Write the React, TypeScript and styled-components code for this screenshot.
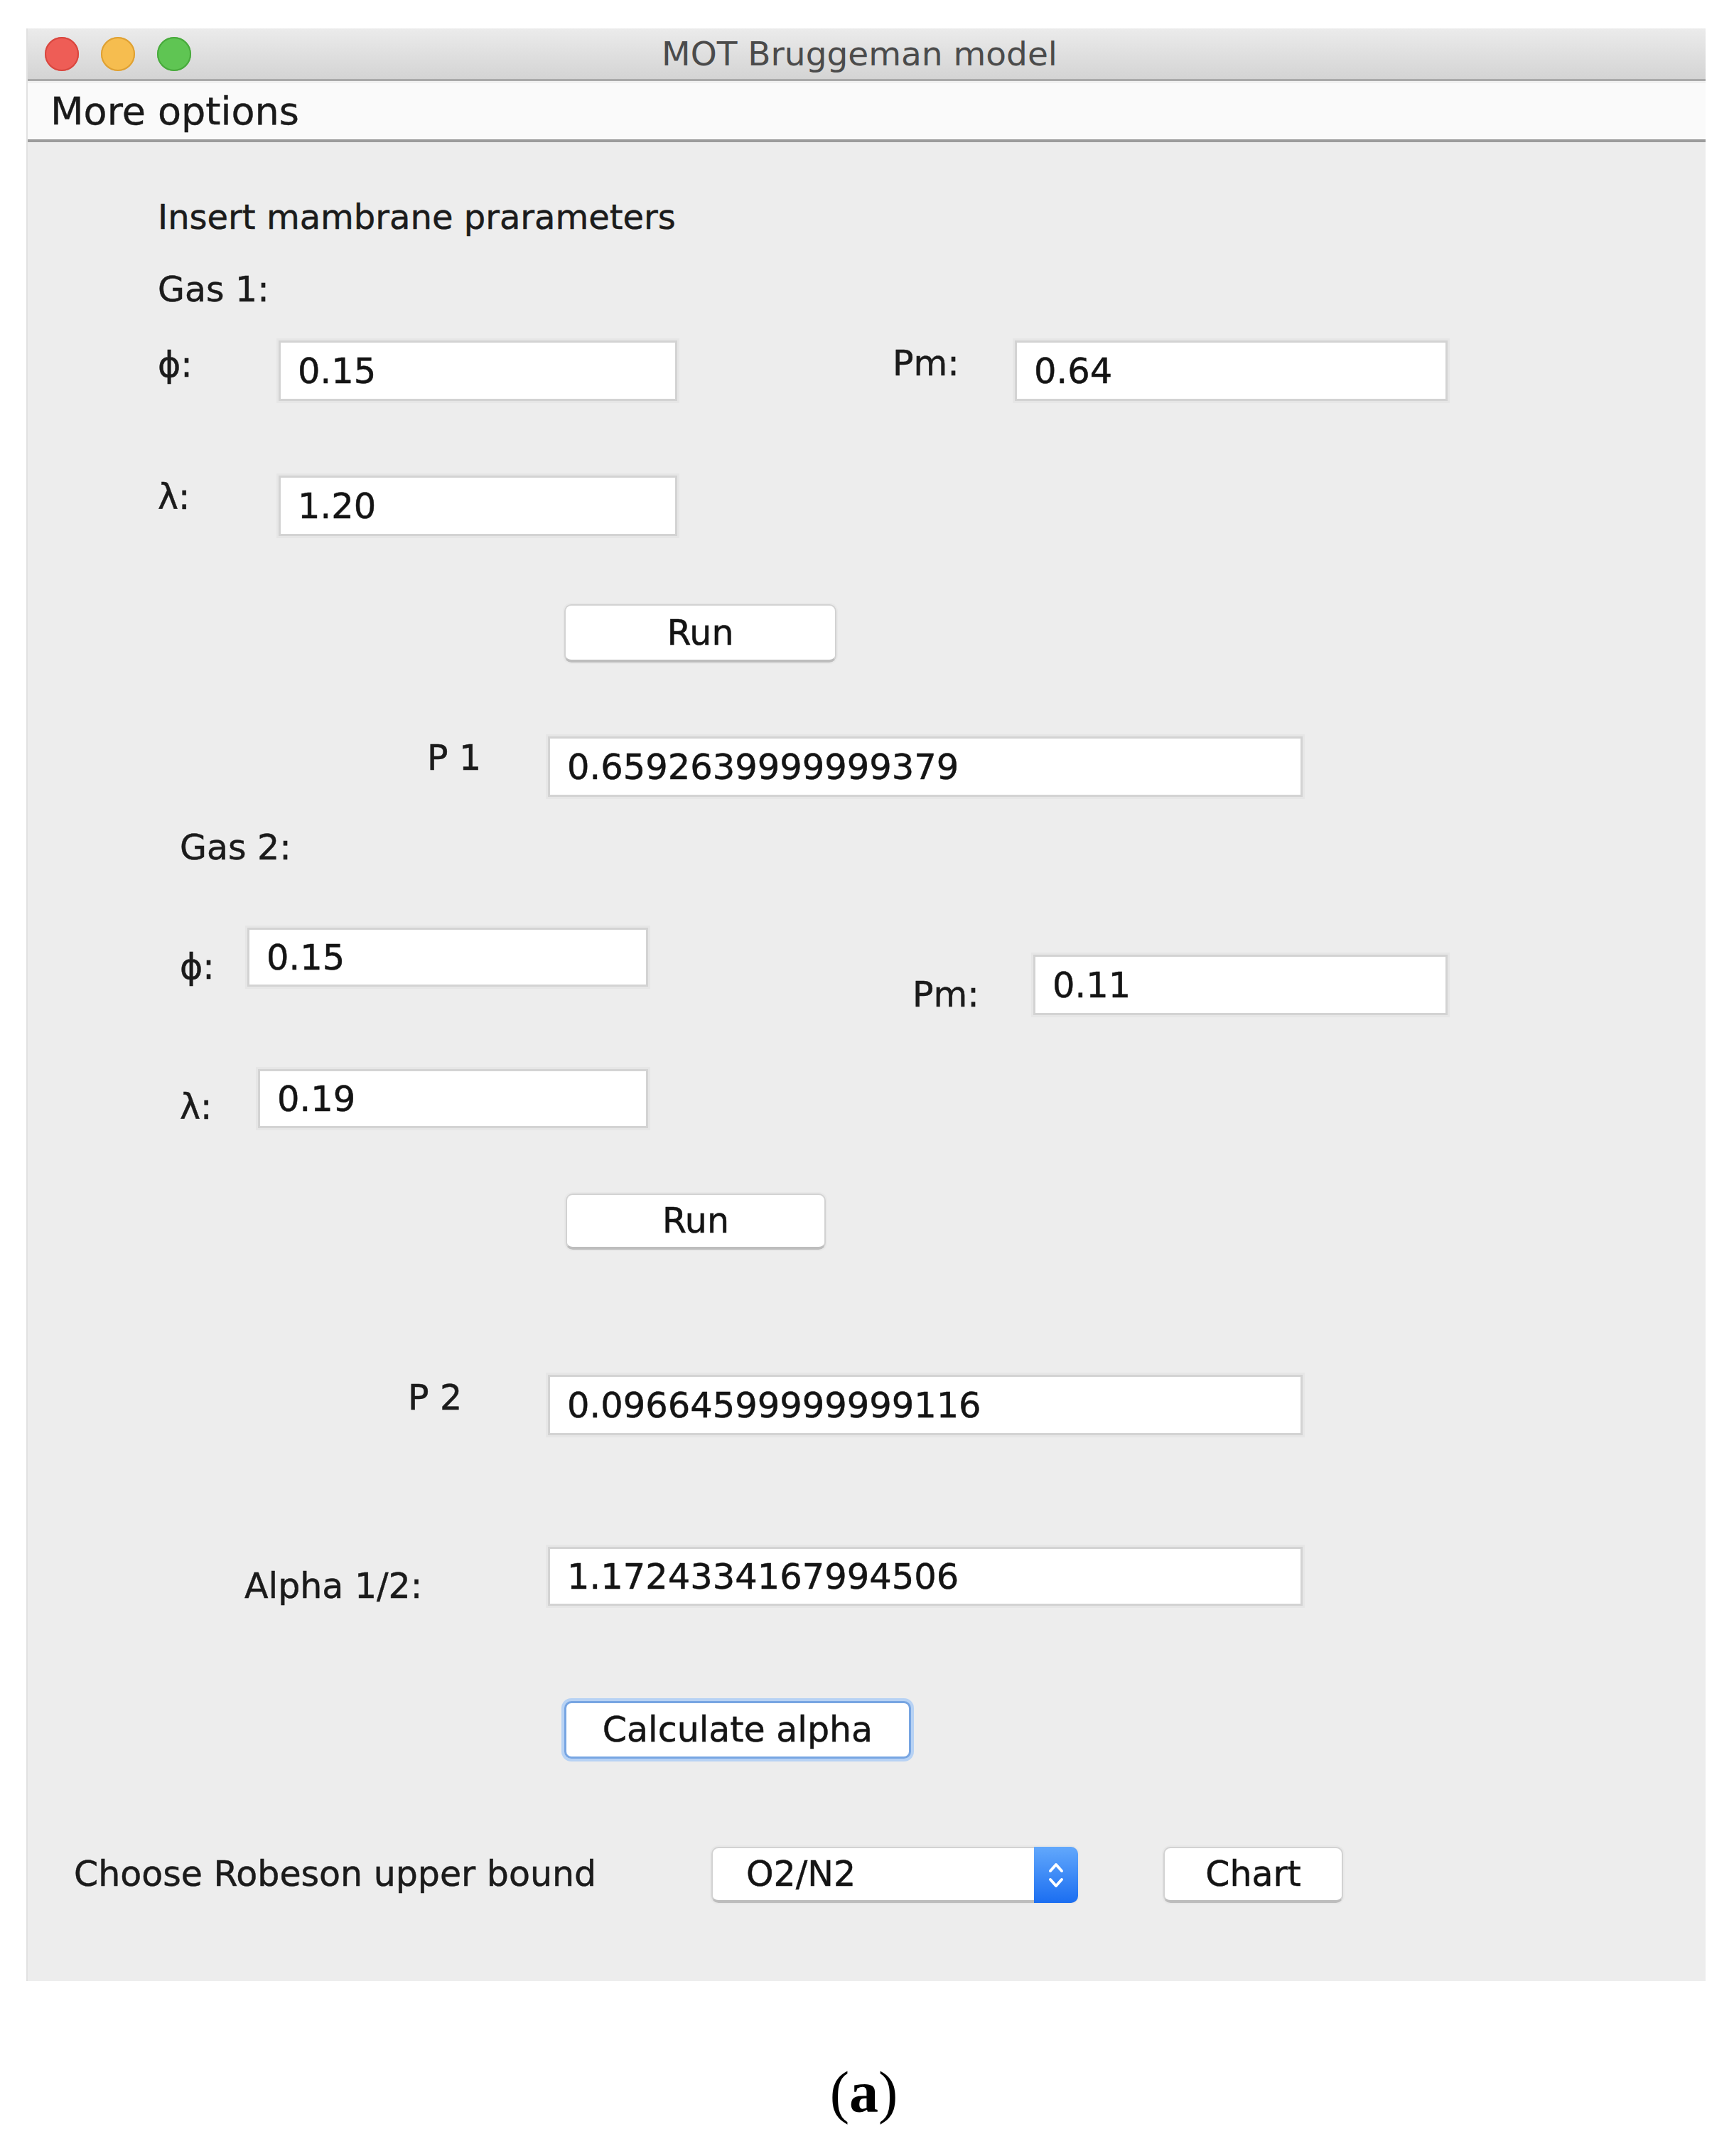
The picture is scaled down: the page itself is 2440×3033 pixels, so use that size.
import styled, { createGlobalStyle } from "styled-components";

const GlobalStyle = createGlobalStyle`
  html, body {
    margin: 0;
    padding: 0;
    background: #ffffff;
  }
  body {
    font-family: "DejaVu Sans", Verdana, sans-serif;
    color: #1b1b1b;
  }
`;

const Page = styled.div`
  width: 2440px;
  min-height: 3033px;
  box-sizing: border-box;
  padding: 40px 40px 0 37px;
  display: flex;
  flex-direction: column;
`;

const Window = styled.div`
  width: 2363px;
  display: flex;
  flex-direction: column;
  background: #ededed;
  border-left: 2px solid #e1e1e1;
  box-sizing: border-box;
`;

const TitleBar = styled.div`
  height: 74px;
  box-sizing: border-box;
  display: grid;
  grid-template-columns: 1fr auto 1fr;
  align-items: center;
  background: linear-gradient(#ebebeb, #d4d4d4);
  border-bottom: 3px solid #a9a9a9;
`;

const Lights = styled.div`
  display: flex;
  gap: 31px;
  padding-left: 24px;
`;

const Light = styled.span<{ $fill: string; $edge: string }>`
  width: 48px;
  height: 48px;
  border-radius: 50%;
  background: ${(p) => p.$fill};
  box-shadow: inset 0 0 0 2px ${(p) => p.$edge};
`;

const Title = styled.div`
  font-size: 47px;
  color: #4b4b4b;
  white-space: nowrap;
  margin-right: 20px;
`;

const MenuBar = styled.div`
  height: 86px;
  box-sizing: border-box;
  display: flex;
  align-items: center;
  padding-left: 32px;
  background: #fafafa;
  border-top: 3px solid #f0f0f0;
  border-bottom: 4px solid #9c9c9c;
  font-size: 54px;
  color: #1a1a1a;
  -webkit-text-stroke: 0.4px #1a1a1a;
`;

const Content = styled.div`
  display: flex;
  flex-direction: column;
  padding: 0 0 110px 0;
`;

const Row = styled.div<{ $top: number }>`
  display: flex;
  align-items: flex-start;
  margin-top: ${(p) => p.$top}px;
`;

const Label = styled.div<{ $ml?: number; $w?: number; $y?: number; $size?: number }>`
  flex-shrink: 0;
  margin-left: ${(p) => p.$ml ?? 0}px;
  margin-top: ${(p) => p.$y ?? 0}px;
  ${(p) => (p.$w ? `width: ${p.$w}px;` : "")}
  font-size: ${(p) => p.$size ?? 49}px;
  line-height: 60px;
  white-space: nowrap;
  color: #1b1b1b;
  -webkit-text-stroke: 0.5px #1b1b1b;
`;

const Field = styled.input<{ $w: number; $h?: number; $y?: number }>`
  flex-shrink: 0;
  width: ${(p) => p.$w}px;
  height: ${(p) => p.$h ?? 85}px;
  margin: ${(p) => p.$y ?? 0}px 0 0 0;
  box-sizing: border-box;
  padding: 0 0 0 24px;
  background: #ffffff;
  border: 3px solid #d3d3d3;
  box-shadow: 0 0 0 3px #e6e6e6;
  font-family: "DejaVu Sans", Verdana, sans-serif;
  font-size: 49.5px;
  color: #141414;
  -webkit-text-stroke: 0.5px #141414;
  outline: none;
`;

const Button = styled.button<{ $ml: number; $w: number; $h: number; $focus?: boolean }>`
  flex-shrink: 0;
  margin-left: ${(p) => p.$ml}px;
  width: ${(p) => p.$w}px;
  height: ${(p) => p.$h}px;
  box-sizing: border-box;
  padding: 0;
  background: #ffffff;
  border-radius: 10px;
  font-family: "DejaVu Sans", Verdana, sans-serif;
  font-size: 49px;
  color: #141414;
  -webkit-text-stroke: 0.5px #141414;
  ${(p) =>
    p.$focus
      ? `border: 3px solid #77a5e2; box-shadow: 0 0 0 4px #b7d2f4;`
      : `border: 2px solid #d2d2d2; border-bottom: 4px solid #bdbdbd; box-shadow: 0 0 0 2px #e8e8e8;`}
`;

const Select = styled.div<{ $w: number }>`
  flex-shrink: 0;
  width: ${(p) => p.$w}px;
  height: 79px;
  box-sizing: border-box;
  display: flex;
  align-items: stretch;
  background: #ffffff;
  border: 2px solid #d2d2d2;
  border-bottom: 4px solid #bdbdbd;
  border-radius: 10px;
  box-shadow: 0 0 0 2px #e8e8e8;
`;

const SelectValue = styled.div`
  flex: 1;
  display: flex;
  align-items: center;
  padding-left: 47px;
  font-size: 49px;
  color: #141414;
  -webkit-text-stroke: 0.5px #141414;
`;

const Stepper = styled.div`
  width: 62px;
  margin: -2px -2px -4px 0;
  display: flex;
  align-items: center;
  justify-content: center;
  background: linear-gradient(#62a8fc, #1b6ef1);
  border-radius: 0 10px 10px 0;
`;

const Caption = styled.div`
  margin-top: 112px;
  text-align: center;
  font-family: "Liberation Serif", "Times New Roman", serif;
  font-size: 82px;
  line-height: 90px;
  color: #000;
  padding-right: 6px;

  & > b {
    font-weight: bold;
  }
`;

const StepperIcon = () => (
  <svg width="30" height="60" viewBox="0 0 30 60" fill="none">
    <path d="M7 24 L15 15 L23 24" stroke="#fff" strokeWidth="4" strokeLinecap="round" strokeLinejoin="round" />
    <path d="M7 36 L15 45 L23 36" stroke="#fff" strokeWidth="4" strokeLinecap="round" strokeLinejoin="round" />
  </svg>
);

export default function App() {
  return (
    <>
      <GlobalStyle />
      <Page>
        <Window>
          <TitleBar>
            <Lights>
              <Light $fill="#ee5d56" $edge="#d8473f" />
              <Light $fill="#f6bd4f" $edge="#dea033" />
              <Light $fill="#5fc553" $edge="#48a93c" />
            </Lights>
            <Title>MOT Bruggeman model</Title>
            <div />
          </TitleBar>
          <MenuBar>More options</MenuBar>
          <Content>
            <Row $top={75}>
              <Label $ml={183} $size={48}>Insert mambrane prarameters</Label>
            </Row>
            <Row $top={43}>
              <Label $ml={183}>Gas 1:</Label>
            </Row>
            <Row $top={41}>
              <Label $ml={183} $w={170} $y={5}>ϕ:</Label>
              <Field $w={561} readOnly defaultValue="0.15" />
              <Label $ml={303} $w={172} $y={3}>Pm:</Label>
              <Field $w={609} readOnly defaultValue="0.64" />
            </Row>
            <Row $top={105}>
              <Label $ml={183} $w={170} $y={1}>λ:</Label>
              <Field $w={561} readOnly defaultValue="1.20" />
            </Row>
            <Row $top={96}>
              <Button $ml={755} $w={383} $h={82}>Run</Button>
            </Row>
            <Row $top={104}>
              <Label $ml={562} $w={170} $y={1}>P 1</Label>
              <Field $w={1062} readOnly defaultValue="0.6592639999999379" />
            </Row>
            <Row $top={42}>
              <Label $ml={214}>Gas 2:</Label>
            </Row>
            <Row $top={82}>
              <Label $ml={214} $w={95} $y={26}>ϕ:</Label>
              <Field $w={564} $h={83} readOnly defaultValue="0.15" />
              <Label $ml={372} $w={170} $y={65}>Pm:</Label>
              <Field $w={583} $y={38} readOnly defaultValue="0.11" />
            </Row>
            <Row $top={74}>
              <Label $ml={214} $w={110} $y={24}>λ:</Label>
              <Field $w={549} $h={83} readOnly defaultValue="0.19" />
            </Row>
            <Row $top={91}>
              <Button $ml={757} $w={366} $h={79}>Run</Button>
            </Row>
            <Row $top={176}>
              <Label $ml={535} $w={197} $y={3}>P 2</Label>
              <Field $w={1062} readOnly defaultValue="0.09664599999999116" />
            </Row>
            <Row $top={157}>
              <Label $ml={305} $w={427} $y={26}>Alpha 1/2:</Label>
              <Field $w={1062} $h={83} readOnly defaultValue="1.1724334167994506" />
            </Row>
            <Row $top={131}>
              <Button $ml={755} $w={488} $h={81} $focus>Calculate alpha</Button>
            </Row>
            <Row $top={124}>
              <Label $ml={65} $w={897} $y={9}>Choose Robeson upper bound</Label>
              <Select $w={516}>
                <SelectValue>O2/N2</SelectValue>
                <Stepper>
                  <StepperIcon />
                </Stepper>
              </Select>
              <Button $ml={120} $w={253} $h={79}>Chart</Button>
            </Row>
          </Content>
        </Window>
        <Caption>
          (<b>a</b>)
        </Caption>
      </Page>
    </>
  );
}
